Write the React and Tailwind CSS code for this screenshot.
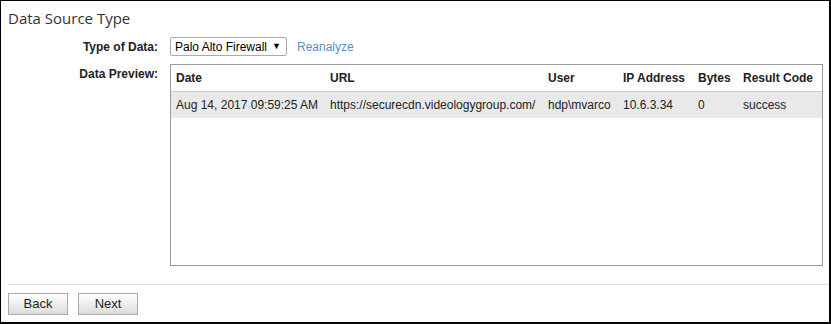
const columns = ["Date", "URL", "User", "IP Address", "Bytes", "Result Code"];

const rows = [
  [
    "Aug 14, 2017 09:59:25 AM",
    "https://securecdn.videologygroup.com/",
    "hdp\\mvarco",
    "10.6.3.34",
    "0",
    "success",
  ],
];

const gridCols = "grid grid-cols-[154px_218px_75px_75px_45px_1fr]";

export default function App() {
  return (
    <div className="w-[831px] h-[324px] bg-white border-l border-t border-r-2 border-b-2 border-black flex flex-col font-['Liberation_Sans',Arial,sans-serif] text-[12px] text-[#222]">
      <h1 className="pl-[7px] pt-[7px] h-[36px] text-[15px] text-[#333] font-['Open_Sans','Segoe_UI',sans-serif] leading-[20px]">
        Data Source Type
      </h1>

      {/* tipo de datos */}
      <div className="flex items-center h-[19px]">
        <label className="w-[157px] text-right font-bold">Type of Data:</label>
        <div className="ml-[12px] h-[19px] w-[117px] border border-[#aaa] rounded-[2px] flex items-center pl-[4px] text-[12px] text-black">
          Palo Alto Firewall
          <span className="ml-[5px] text-[9px]">▼</span>
        </div>
        <a className="ml-[10px] text-[#5b8dc8] text-[12px]">Reanalyze</a>
      </div>

      {/* vista previa */}
      <div className="flex mt-[8px]">
        <label className="w-[157px] text-right font-bold pt-[1px]">Data Preview:</label>
        <div className="ml-[12px] w-[653px] h-[202px] border border-[#999]">
          <div className={`${gridCols} h-[27px] items-center border-b border-[#ccc] font-bold`}>
            {columns.map((c) => (
              <div key={c} className="pl-[5px] whitespace-nowrap">
                {c}
              </div>
            ))}
          </div>
          {rows.map((r, i) => (
            <div key={i} className={`${gridCols} h-[26px] items-center bg-[#e9e9e9]`}>
              {r.map((v, j) => (
                <div key={j} className="pl-[5px] whitespace-nowrap">
                  {v}
                </div>
              ))}
            </div>
          ))}
        </div>
      </div>

      <div className="mt-[18px] ml-[7px] border-t border-[#ddd]" />

      <div className="flex gap-[10px] pl-[7px] pt-[8px]">
        <button className="w-[60px] h-[22px] border border-[#aaa] bg-gradient-to-b from-white to-[#dcdcdc] text-[13px] text-[#222]">
          Back
        </button>
        <button className="w-[60px] h-[22px] border border-[#aaa] bg-gradient-to-b from-white to-[#dcdcdc] text-[13px] text-[#222]">
          Next
        </button>
      </div>
    </div>
  );
}
